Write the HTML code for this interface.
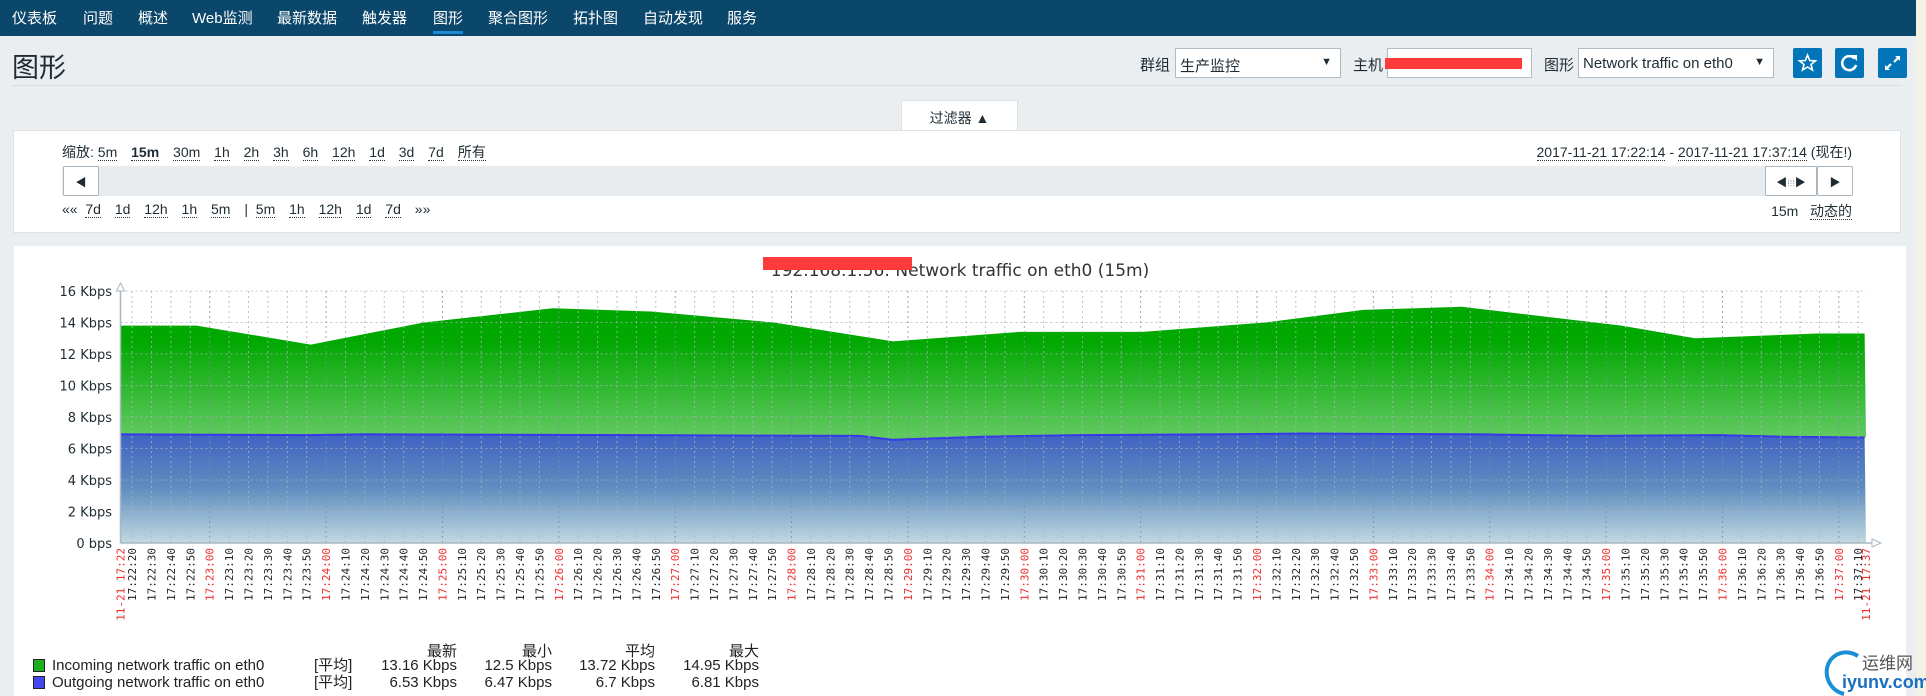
<!DOCTYPE html>
<html><head><meta charset="utf-8">
<style>
*{margin:0;padding:0;box-sizing:border-box}
body{width:1926px;height:696px;overflow:hidden;background:#ebeef0;font-family:"Liberation Sans","Noto Sans CJK SC",sans-serif;color:#1f2c33;position:relative}
.abs{position:absolute}
#nav{left:0;top:0;width:1916px;height:36px;background:#0b466b}
#nav span{position:absolute;top:7px;color:#fff;font-size:15px;white-space:nowrap}
#strip{left:1916px;top:0;width:10px;height:696px;background:#f4f2e4}
.lbl{font-size:15px;top:54px}
.sel{background:#fff;border:1px solid #b0bcc4;height:30px;top:48px;font-size:15px;padding:6px 4px}
.sel i{position:absolute;right:8px;top:7px;font-style:normal;font-size:11px}
.btn{top:48px;width:29px;height:30px;background:#0275b8;border-radius:2px}
.f{font-size:14px;white-space:nowrap}
.u{border-bottom:1px dotted #333;margin-right:10px}
.sbtn{background:#fff;border:1px solid #aab6bf;border-radius:2px;height:30px;top:166px}
.lg{font-family:"Liberation Sans","Noto Sans CJK SC",sans-serif;font-size:15px;color:#222}
</style></head><body>
<div id="nav" class="abs">
<span style="left:12px">仪表板</span><span style="left:83px">问题</span><span style="left:138px">概述</span><span style="left:192px">Web监测</span><span style="left:277px">最新数据</span><span style="left:362px">触发器</span><span style="left:433px">图形</span><span style="left:488px">聚合图形</span><span style="left:573px">拓扑图</span><span style="left:643px">自动发现</span><span style="left:727px">服务</span>
<div class="abs" style="left:433px;top:31px;width:30px;height:3px;background:#1a8ad4"></div>
</div>
<div id="strip" class="abs"></div>
<div class="abs" style="left:12px;top:46px;font-size:27px;color:#1f2c33">图形</div>
<div class="abs" style="left:12px;top:85px;width:1890px;height:1px;background:#d9dee2"></div>

<div class="abs lbl" style="left:1140px">群组</div>
<div class="abs sel" style="left:1175px;width:166px">生产监控<i>▼</i></div>
<div class="abs lbl" style="left:1353px">主机</div>
<div class="abs sel" style="left:1387px;width:145px"><i>▼</i></div>
<div class="abs" style="left:1385px;top:58px;width:137px;height:11px;background:#fd3b3b"></div>
<div class="abs lbl" style="left:1544px">图形</div>
<div class="abs sel" style="left:1578px;width:196px">Network traffic on eth0<i>▼</i></div>
<div class="abs btn" style="left:1793px"><svg width="29" height="30"><polygon points="14.5,7 16.7,12.5 22.5,12.8 18,16.5 19.5,22 14.5,19 9.5,22 11,16.5 6.5,12.8 12.3,12.5" fill="none" stroke="#fff" stroke-width="1.6"/></svg></div>
<div class="abs btn" style="left:1835px"><svg width="29" height="30"><path d="M19.5 10.5 A7 7 0 1 0 21 17" fill="none" stroke="#fff" stroke-width="2.6"/><polygon points="16,7 22,7 22,13" fill="#fff"/></svg></div>
<div class="abs btn" style="left:1878px"><svg width="29" height="30"><path d="M16 14 L21 9 M13 16 L8 21" stroke="#fff" stroke-width="2.2"/><polygon points="17,8 22,8 22,13" fill="#fff"/><polygon points="7,17 7,22 12,22" fill="#fff"/></svg></div>

<div class="abs" style="left:901px;top:100px;width:117px;height:31px;background:#fff;border:1px solid #dde2e6;border-bottom:none;font-size:14px;text-align:center;padding-top:7px">过滤器 ▲</div>
<div class="abs" style="left:13px;top:130px;width:1888px;height:103px;background:#fff;border:1px solid #dde2e6"></div>
<div class="abs f" style="left:62px;top:142px">缩放: <span class="u">5m</span> <b class="u">15m</b> <span class="u">30m</span> <span class="u">1h</span> <span class="u">2h</span> <span class="u">3h</span> <span class="u">6h</span> <span class="u">12h</span> <span class="u">1d</span> <span class="u">3d</span> <span class="u">7d</span> <span class="u">所有</span></div>
<div class="abs f" style="right:74px;top:142px"><span style="border-bottom:1px dotted #333">2017-11-21 17:22:14</span> - <span style="border-bottom:1px dotted #333">2017-11-21 17:37:14</span> (现在!)</div>
<div class="abs" style="left:62px;top:166px;width:1790px;height:30px;background:#e9ecef"></div>
<div class="abs sbtn" style="left:63px;width:36px;text-align:center;font-size:11px;padding-top:7px">◀</div>
<div class="abs sbtn" style="left:1765px;width:52px;text-align:center;font-size:11px;padding-top:7px">◀<span style="color:#999;font-size:9px">⁞⁞⁞</span>▶</div>
<div class="abs sbtn" style="left:1817px;width:36px;text-align:center;font-size:11px;padding-top:7px">▶</div>
<div class="abs f" style="left:62px;top:201px">«« &nbsp;<span class="u">7d</span> <span class="u">1d</span> <span class="u">12h</span> <span class="u">1h</span> <span class="u">5m</span> | &nbsp;<span class="u">5m</span> <span class="u">1h</span> <span class="u">12h</span> <span class="u">1d</span> <span class="u">7d</span> »»</div>
<div class="abs f" style="right:74px;top:201px">15m &nbsp; <span style="border-bottom:1px dotted #333">动态的</span></div>

<div class="abs" style="left:14px;top:246px;width:1892px;height:450px;background:#fff"></div>
<svg class="abs" id="g" style="left:0;top:0" width="1926" height="696">
<defs>
<linearGradient id="gg" x1="0" y1="290" x2="0" y2="434" gradientUnits="userSpaceOnUse"><stop offset="0" stop-color="#00a600"/><stop offset="0.35" stop-color="#00a800"/><stop offset="1" stop-color="#5fc85f"/></linearGradient>
<linearGradient id="bg" x1="0" y1="434" x2="0" y2="543" gradientUnits="userSpaceOnUse"><stop offset="0" stop-color="#3f62c2"/><stop offset="0.5" stop-color="#5f8ec0"/><stop offset="1" stop-color="#c2d9e0"/></linearGradient>
</defs>
<text x="960" y="276" text-anchor="middle" font-size="17" fill="#333" font-family="DejaVu Sans,sans-serif">192.168.1.56: Network traffic on eth0 (15m)</text>
<rect x="763" y="257" width="149" height="13" fill="#fd3b3b"/>
<g id="gl"></g>
</svg>
<div class="abs lg" style="left:52px;top:640px;width:720px">
<div class="abs" style="left:345px;top:0;width:60px;text-align:right">最新</div>
<div class="abs" style="left:440px;top:0;width:60px;text-align:right">最小</div>
<div class="abs" style="left:543px;top:0;width:60px;text-align:right">平均</div>
<div class="abs" style="left:647px;top:0;width:60px;text-align:right">最大</div>
</div>
<div class="abs" style="left:33px;top:659px;width:12px;height:13px;background:#1cb01c;border:1px solid #222"></div>
<div class="abs" style="left:33px;top:676px;width:12px;height:13px;background:#4646f0;border:1px solid #222"></div>
<div class="abs lg" style="left:52px;top:657px;line-height:17px;width:720px">
<div class="abs" style="left:0;white-space:nowrap">Incoming network traffic on eth0</div><div class="abs" style="left:262px">[平均]</div>
<div class="abs" style="left:305px;width:100px;text-align:right">13.16 Kbps</div><div class="abs" style="left:400px;width:100px;text-align:right">12.5 Kbps</div><div class="abs" style="left:503px;width:100px;text-align:right">13.72 Kbps</div><div class="abs" style="left:607px;width:100px;text-align:right">14.95 Kbps</div>
<div class="abs" style="left:0;top:17px;white-space:nowrap">Outgoing network traffic on eth0</div><div class="abs" style="left:262px;top:17px">[平均]</div>
<div class="abs" style="left:305px;top:17px;width:100px;text-align:right">6.53 Kbps</div><div class="abs" style="left:400px;top:17px;width:100px;text-align:right">6.47 Kbps</div><div class="abs" style="left:503px;top:17px;width:100px;text-align:right">6.7 Kbps</div><div class="abs" style="left:607px;top:17px;width:100px;text-align:right">6.81 Kbps</div>
</div>
<div class="abs" style="left:1822px;top:648px;width:96px;height:48px">
<svg width="40" height="48" class="abs" style="left:0;top:0"><path d="M36 8 C20 -2 2 10 5 28 C7 38 14 44 22 46" fill="none" stroke="#1a8fd6" stroke-width="4"/></svg>
<div class="abs" style="left:40px;top:1px;font-size:17px;color:#555">运维网</div>
<div class="abs" style="left:20px;top:24px;font-size:18px;color:#1a6fc0;font-weight:bold">iyunv.com</div>
</div>
<script>
(function(){
var L=120.5,R=1866,T=291,B=543,ns="http://www.w3.org/2000/svg",g=document.getElementById('gl');
var pxs=(R-L)/900;
function el(n,a,t){var e=document.createElementNS(ns,n);for(var k in a)e.setAttribute(k,a[k]);if(t)e.textContent=t;g.appendChild(e);return e;}
function Y(v){return B-v*(B-T)/16;}
var gd=[[98,13.8],[160,13.8],[253,12.6],[345,14.0],[450,14.9],[530,14.7],[630,14.0],[727,12.8],[830,13.4],[930,13.4],[1030,14.0],[1110,14.8],[1190,15.0],[1320,13.8],[1380,13.0],[1480,13.3],[1518,13.3]];
var bd=[[98,6.9],[250,6.85],[300,6.9],[700,6.8],[727,6.55],[800,6.75],[880,6.85],[1000,6.9],[1060,6.95],[1200,6.9],[1300,6.8],[1400,6.85],[1450,6.75],[1518,6.7]];
function pts(d){return d.map(function(p){return (p[0]*1.2283).toFixed(1)+','+Y(p[1]).toFixed(1)}).join(' ');}
el('polygon',{points:pts(gd)+' '+R+','+Y(6.7)+' '+pts(bd.slice().reverse()),fill:'url(#gg)'});
el('polygon',{points:pts(bd)+' '+R+','+B+' '+L+','+B,fill:'url(#bg)'});
el('polyline',{points:pts(bd),fill:'none',stroke:'#3838e8','stroke-width':2});
for(var i=0;i<=8;i++){var y=Y(i*2);el('line',{x1:L,y1:y,x2:R,y2:y,stroke:'#a9b4bd','stroke-width':1,'stroke-dasharray':'2,3',opacity:.7});
el('text',{x:112,y:y+5,'text-anchor':'end','font-size':13,fill:'#1f2c33','font-family':'DejaVu Sans,sans-serif'},(i*2)+(i?' Kbps':' bps'));}
for(var s=6;s<900;s+=10){var x=L+s*pxs,t=17*3600+22*60+14+s,h=Math.floor(t/3600),m=Math.floor(t%3600/60),se=t%60;
var red=se==0;el('line',{x1:x,y1:T,x2:x,y2:B,stroke:red?'#7f909c':'#a9b4bd','stroke-dasharray':'2,3',opacity:.8});
var lab=h+':'+(m<10?'0':'')+m+':'+(se<10?'0':'')+se;
el('text',{x:0,y:0,transform:'translate('+(x+4)+',548) rotate(-90)','text-anchor':'end','font-size':11,fill:red?'#ef2b2b':'#222','font-family':'DejaVu Sans Mono,monospace'},lab);}
el('text',{x:0,y:0,transform:'translate('+(L+4)+',548) rotate(-90)','text-anchor':'end','font-size':11,fill:'#ef2b2b','font-family':'DejaVu Sans Mono,monospace'},'11-21 17:22');
el('text',{x:0,y:0,transform:'translate('+(R+4)+',548) rotate(-90)','text-anchor':'end','font-size':11,fill:'#ef2b2b','font-family':'DejaVu Sans Mono,monospace'},'11-21 17:37');
el('line',{x1:L,y1:283,x2:L,y2:B,stroke:'#a9b8c4','stroke-width':1.5});
el('line',{x1:L,y1:B,x2:1876,y2:B,stroke:'#a9b8c4','stroke-width':1.5});
el('polygon',{points:(L-4)+',291 '+L+',283 '+(L+4)+',291',fill:'#fff',stroke:'#a9b8c4'});
el('polygon',{points:'1872,539 1881,543 1872,547',fill:'#fff',stroke:'#a9b8c4'});
})();
</script>
</body></html>
